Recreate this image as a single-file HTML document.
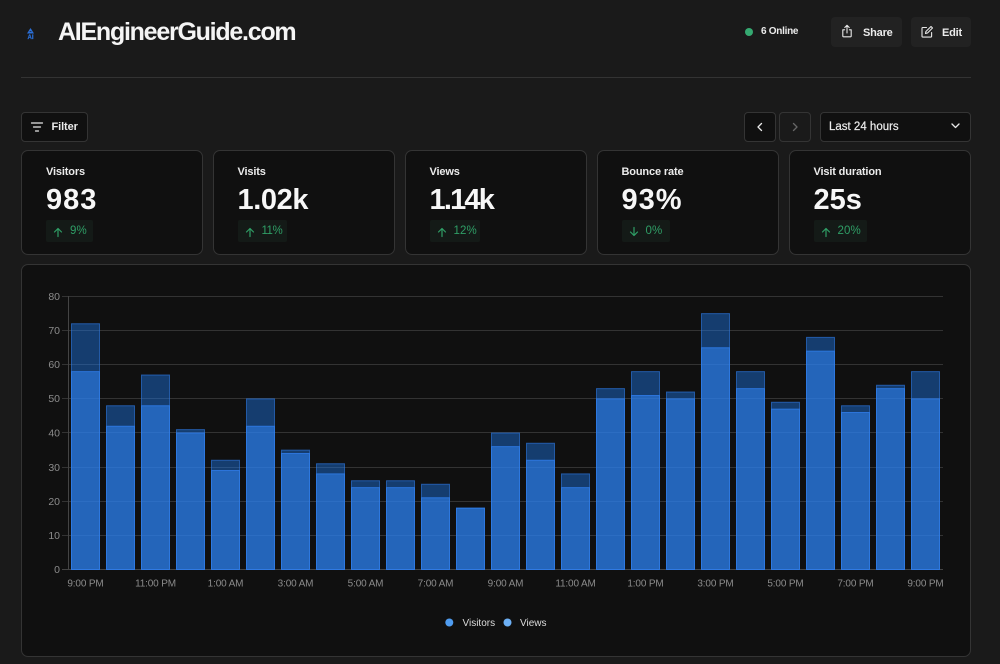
<!DOCTYPE html>
<html lang="en">
<head>
<meta charset="utf-8">
<title>AIEngineerGuide.com</title>
<style>
html,body{margin:0;padding:0;background:#1a1a1a}
body{width:1000px;height:664px;position:relative;overflow:hidden;font-family:"Liberation Sans",sans-serif;color:#fff}
.a{position:absolute;white-space:nowrap}
.title{left:58px;top:17px;font-size:25px;line-height:30px;font-weight:700;letter-spacing:-1.25px;color:#f5f5f5}
.online{left:761px;top:25px;font-size:10px;line-height:13px;font-weight:700;color:#ececec;letter-spacing:-.28px}
.dot{left:745px;top:27.5px;width:8px;height:8px;border-radius:50%;background:#35a971}
.gbtn{top:17px;height:30px;border-radius:4px;background:#222222}
.gt{top:25.5px;font-size:11px;line-height:15px;font-weight:700;color:#ececec;letter-spacing:-.2px}
.divider{left:21px;top:77px;width:950px;height:1px;background:#333}
.box{box-sizing:border-box;background:#101010;border:1px solid #343434;border-radius:4px}
.card{box-sizing:border-box;position:absolute;top:150px;width:182px;height:104.5px;background:#101010;border:1px solid #343434;border-radius:7px}
.label{position:absolute;left:24px;top:14px;font-size:11px;line-height:14px;font-weight:700;color:#ececec;white-space:nowrap;letter-spacing:-.15px}
.val{position:absolute;left:24px;top:32px;font-size:29px;line-height:34px;font-weight:700;color:#f7f7f7;white-space:nowrap}
.badge{position:absolute;left:24px;top:69px;height:22px;background:#141a17;border-radius:2px}
.badge svg{position:absolute;left:6px;top:5.5px}
.badge span{position:absolute;left:24px;top:4px;font-size:11.5px;line-height:14px;color:#2f9e66;letter-spacing:.1px;white-space:nowrap}
.chart{left:21px;top:264px;width:950px;height:393px;box-sizing:border-box;background:#101010;border:1px solid #343434;border-radius:7px}
svg{display:block}
.full{position:absolute;left:0;top:0}
</style>
</head>
<body>
<svg class="a" style="left:26px;top:25px" width="10" height="16" viewBox="0 0 10 16"><path d="M4.5 3 8 8.5H1z" fill="#2a6fd8"/><path d="M3.6 6.3h1.8" stroke="#1a1a1a" stroke-width=".6"/><text x="4.5" y="14" font-size="6" font-weight="700" text-anchor="middle" fill="#2a6fd8" stroke="#2a6fd8" stroke-width=".25" font-family="Liberation Sans">AI</text></svg>
<div class="a title">AIEngineerGuide.com</div>

<div class="a dot"></div>
<div class="a online">6 Online</div>
<div class="a gbtn" style="left:831px;width:71px"></div>
<svg class="a" style="left:840px;top:24px" width="14" height="14" viewBox="0 0 14 14" fill="none" stroke="#e8e8e8" stroke-width="1.1" stroke-linecap="round" stroke-linejoin="round"><path d="M7 9V1.5M4.8 3.5 7 1.3l2.2 2.2M4.6 5.8H2.8v6.2q0 .8.8.8h6.8q.8 0 .8-.8V5.8H9.4"/></svg>
<div class="a gt" style="left:863px">Share</div>
<div class="a gbtn" style="left:911px;width:60px"></div>
<svg class="a" style="left:920px;top:24.5px" width="14" height="14" viewBox="0 0 14 14" fill="none" stroke="#e8e8e8" stroke-width="1.1" stroke-linecap="round" stroke-linejoin="round"><path d="M6.5 2.5H2.8q-.8 0-.8.8v8q0 .8.8.8h8q.8 0 .8-.8V7.5M5.5 8.5l.4-2L11 1.5l1.5 1.5-5 5z"/></svg>
<div class="a gt" style="left:942px">Edit</div>

<div class="a divider"></div>

<div class="a box" style="left:21px;top:112px;width:66.5px;height:29.5px"></div>
<svg class="a" style="left:30px;top:120.5px" width="15" height="12" viewBox="0 0 15 12" stroke="#e8e8e8" stroke-width="1.2" stroke-linecap="round"><path d="M1.5 2h11M3.5 6h7M5.5 10h3"/></svg>
<div class="a" style="left:51.5px;top:120px;font-size:11px;line-height:14px;font-weight:700;color:#ececec;letter-spacing:-.1px">Filter</div>

<div class="a box" style="left:744px;top:111.5px;width:31.5px;height:30px"></div>
<svg class="a" style="left:755px;top:121px" width="10" height="12" viewBox="0 0 10 12" fill="none" stroke="#e8e8e8" stroke-width="1.3" stroke-linecap="round" stroke-linejoin="round"><path d="M6.5 2.5 3 6l3.5 3.5"/></svg>
<div class="a box" style="left:779px;top:111.5px;width:31.5px;height:30px;background:#1a1a1a"></div>
<svg class="a" style="left:790px;top:121px" width="10" height="12" viewBox="0 0 10 12" fill="none" stroke="#666" stroke-width="1.3" stroke-linecap="round" stroke-linejoin="round"><path d="M3.5 2.5 7 6 3.5 9.5"/></svg>
<div class="a box" style="left:820px;top:111.5px;width:151px;height:30px"></div>
<div class="a" style="left:829px;top:120px;font-size:11.5px;line-height:14px;color:#ececec;-webkit-text-stroke:.2px #ececec">Last 24 hours</div>
<svg class="a" style="left:950px;top:121px" width="11" height="10" viewBox="0 0 11 10" fill="none" stroke="#e8e8e8" stroke-width="1.3" stroke-linecap="round" stroke-linejoin="round"><path d="M2 3 5.5 6.5 9 3"/></svg>

<div class="card" style="left:21px">
  <div class="label">Visitors</div><div class="val" style="letter-spacing:1px">983</div>
  <div class="badge" style="width:47px"><svg width="12" height="12" viewBox="0 0 12 12" fill="none" stroke="#2f9e66" stroke-width="1.2" stroke-linecap="round" stroke-linejoin="round"><path d="M6 10.5v-8M2.5 6 6 2.5 9.5 6"/></svg><span>9%</span></div>
</div>
<div class="card" style="left:212.5px">
  <div class="label">Visits</div><div class="val" style="letter-spacing:-.4px">1.02k</div>
  <div class="badge" style="width:49px"><svg width="12" height="12" viewBox="0 0 12 12" fill="none" stroke="#2f9e66" stroke-width="1.2" stroke-linecap="round" stroke-linejoin="round"><path d="M6 10.5v-8M2.5 6 6 2.5 9.5 6"/></svg><span style="letter-spacing:-.5px">11%</span></div>
</div>
<div class="card" style="left:404.5px">
  <div class="label">Views</div><div class="val" style="letter-spacing:-1.8px">1.14k</div>
  <div class="badge" style="width:50px"><svg width="12" height="12" viewBox="0 0 12 12" fill="none" stroke="#2f9e66" stroke-width="1.2" stroke-linecap="round" stroke-linejoin="round"><path d="M6 10.5v-8M2.5 6 6 2.5 9.5 6"/></svg><span>12%</span></div>
</div>
<div class="card" style="left:596.5px">
  <div class="label">Bounce rate</div><div class="val" style="letter-spacing:1px">93%</div>
  <div class="badge" style="width:48px"><svg width="12" height="12" viewBox="0 0 12 12" fill="none" stroke="#2f9e66" stroke-width="1.2" stroke-linecap="round" stroke-linejoin="round"><path d="M6 1.5v8M2.5 6 6 9.5 9.5 6"/></svg><span>0%</span></div>
</div>
<div class="card" style="left:788.5px;width:182.5px">
  <div class="label">Visit duration</div><div class="val">25s</div>
  <div class="badge" style="width:53px"><svg width="12" height="12" viewBox="0 0 12 12" fill="none" stroke="#2f9e66" stroke-width="1.2" stroke-linecap="round" stroke-linejoin="round"><path d="M6 10.5v-8M2.5 6 6 2.5 9.5 6"/></svg><span>20%</span></div>
</div>

<div class="a chart"></div>

<svg class="full" width="1000" height="664" viewBox="0 0 1000 664" font-family="Liberation Sans">
  <g stroke="#333" stroke-width="1" fill="none">
    <path d="M62 296.5H943M62 330.5H943M62 364.5H943M62 398.5H943M62 432.5H943M62 467.5H943M62 501.5H943M62 535.5H943"/>
    <path d="M62 569.5H943" stroke="#444"/>
    <path d="M68.5 296V570" stroke="#444"/>
  </g>
  <g fill="rgba(28,117,228,.45)" stroke="rgba(47,125,235,.6)" stroke-width="1">
    <path d="M71.5 323.8h28V569.5h-28z"/>
    <path d="M106.5 405.7h28V569.5h-28z"/>
    <path d="M141.5 375h28V569.5h-28z"/>
    <path d="M176.5 429.6h28V569.5h-28z"/>
    <path d="M211.5 460.3h28V569.5h-28z"/>
    <path d="M246.5 398.9h28V569.5h-28z"/>
    <path d="M281.5 450.1h28V569.5h-28z"/>
    <path d="M316.5 463.7h28V569.5h-28z"/>
    <path d="M351.5 480.8h28V569.5h-28z"/>
    <path d="M386.5 480.8h28V569.5h-28z"/>
    <path d="M421.5 484.2h28V569.5h-28z"/>
    <path d="M456.5 508.1h28V569.5h-28z"/>
    <path d="M491.5 433h28V569.5h-28z"/>
    <path d="M526.5 443.2h28V569.5h-28z"/>
    <path d="M561.5 473.9h28V569.5h-28z"/>
    <path d="M596.5 388.6h28V569.5h-28z"/>
    <path d="M631.5 371.6h28V569.5h-28z"/>
    <path d="M666.5 392h28V569.5h-28z"/>
    <path d="M701.5 313.6h28V569.5h-28z"/>
    <path d="M736.5 371.6h28V569.5h-28z"/>
    <path d="M771.5 402.3h28V569.5h-28z"/>
    <path d="M806.5 337.4h28V569.5h-28z"/>
    <path d="M841.5 405.7h28V569.5h-28z"/>
    <path d="M876.5 385.2h28V569.5h-28z"/>
    <path d="M911.5 371.6h28V569.5h-28z"/>
  </g>
  <g fill="rgba(47,129,237,.6)" stroke="rgba(47,125,235,.8)" stroke-width="1">
    <path d="M71.5 371.6h28V569.5h-28z"/>
    <path d="M106.5 426.2h28V569.5h-28z"/>
    <path d="M141.5 405.7h28V569.5h-28z"/>
    <path d="M176.5 433h28V569.5h-28z"/>
    <path d="M211.5 470.5h28V569.5h-28z"/>
    <path d="M246.5 426.2h28V569.5h-28z"/>
    <path d="M281.5 453.5h28V569.5h-28z"/>
    <path d="M316.5 473.9h28V569.5h-28z"/>
    <path d="M351.5 487.6h28V569.5h-28z"/>
    <path d="M386.5 487.6h28V569.5h-28z"/>
    <path d="M421.5 497.8h28V569.5h-28z"/>
    <path d="M456.5 508.1h28V569.5h-28z"/>
    <path d="M491.5 446.6h28V569.5h-28z"/>
    <path d="M526.5 460.3h28V569.5h-28z"/>
    <path d="M561.5 487.6h28V569.5h-28z"/>
    <path d="M596.5 398.9h28V569.5h-28z"/>
    <path d="M631.5 395.5h28V569.5h-28z"/>
    <path d="M666.5 398.9h28V569.5h-28z"/>
    <path d="M701.5 347.7h28V569.5h-28z"/>
    <path d="M736.5 388.6h28V569.5h-28z"/>
    <path d="M771.5 409.1h28V569.5h-28z"/>
    <path d="M806.5 351.1h28V569.5h-28z"/>
    <path d="M841.5 412.5h28V569.5h-28z"/>
    <path d="M876.5 388.6h28V569.5h-28z"/>
    <path d="M911.5 398.9h28V569.5h-28z"/>
  </g>
  <g fill="#8c8c8c" font-size="10.5" text-anchor="end">
    <text x="60" y="300">80</text>
    <text x="60" y="334">70</text>
    <text x="60" y="368">60</text>
    <text x="60" y="402">50</text>
    <text x="60" y="436.5">40</text>
    <text x="60" y="471">30</text>
    <text x="60" y="505">20</text>
    <text x="60" y="539">10</text>
    <text x="60" y="573">0</text>
  </g>
  <g fill="#8c8c8c" font-size="10" letter-spacing="-.15" text-anchor="middle">
    <text x="85.5" y="586.5">9:00 PM</text>
    <text x="155.5" y="586.5">11:00 PM</text>
    <text x="225.5" y="586.5">1:00 AM</text>
    <text x="295.5" y="586.5">3:00 AM</text>
    <text x="365.5" y="586.5">5:00 AM</text>
    <text x="435.5" y="586.5">7:00 AM</text>
    <text x="505.5" y="586.5">9:00 AM</text>
    <text x="575.5" y="586.5">11:00 AM</text>
    <text x="645.5" y="586.5">1:00 PM</text>
    <text x="715.5" y="586.5">3:00 PM</text>
    <text x="785.5" y="586.5">5:00 PM</text>
    <text x="855.5" y="586.5">7:00 PM</text>
    <text x="925.5" y="586.5">9:00 PM</text>
  </g>
  <circle cx="449.3" cy="622.5" r="4" fill="#4f9cf0"/>
  <circle cx="507.5" cy="622.5" r="4" fill="#6db0f5"/>
  <text x="462.5" y="626" font-size="10" fill="#dcdcdc">Visitors</text>
  <text x="520" y="626" font-size="10" fill="#dcdcdc">Views</text>
</svg>
</body>
</html>
